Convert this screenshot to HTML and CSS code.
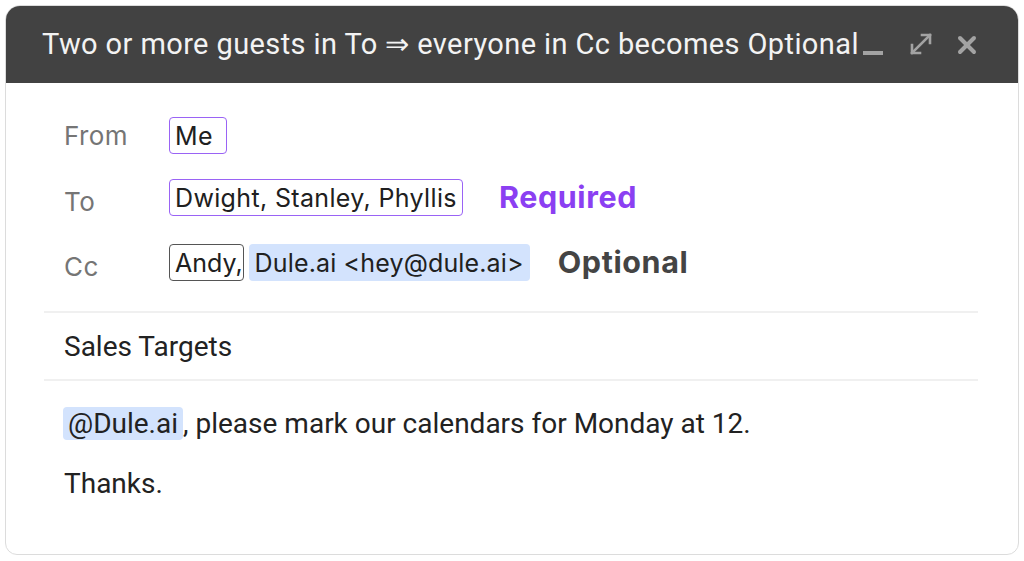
FILE: index.html
```html
<!DOCTYPE html>
<html>
<head>
<meta charset="utf-8">
<link rel="stylesheet" href="styles.css">
</head>
<body>
<div class="card">
  <div class="header">
    <div class="title">Two or more guests in To &rArr; everyone in Cc becomes Optional</div>
    <div class="controls">
      <svg class="ic ic-min" width="20" height="22" viewBox="0 0 20 22"><rect x="0" y="16" width="20" height="4" fill="#a3a3a3"/></svg>
      <svg class="ic ic-exp" width="24" height="24" viewBox="0 0 24 24"><g stroke="#a3a3a3" stroke-width="2.6" fill="none" stroke-linecap="square"><path d="M3 21 L21 3"/><path d="M13 3 H21 V11"/><path d="M3 13 V21 H11"/></g></svg>
      <svg class="ic ic-x" width="20" height="20" viewBox="0 0 20 20"><g stroke="#a3a3a3" stroke-width="4" stroke-linecap="round"><path d="M3 3 L17 17"/><path d="M17 3 L3 17"/></g></svg>
    </div>
  </div>
  <div class="content">
    <div class="fields">
      <div class="row row-from">
        <span class="label">From</span>
        <span class="chip chip-purple chip-me">Me</span>
      </div>
      <div class="row row-to">
        <span class="label">To</span>
        <span class="chip chip-purple">Dwight, Stanley, Phyllis</span>
        <span class="tag tag-req">Required</span>
      </div>
      <div class="row row-cc">
        <span class="label">Cc</span>
        <span class="chip chip-dark">Andy,</span>
        <span class="chip chip-blue">Dule.ai &lt;hey@dule.ai&gt;</span>
        <span class="tag tag-opt">Optional</span>
      </div>
    </div>
    <div class="subject">Sales Targets</div>
    <div class="message">
      <p class="line1"><span class="mention">@Dule.ai</span>, please mark our calendars for Monday at 12.</p>
      <p class="line2">Thanks.</p>
    </div>
  </div>
</div>
</body>
</html>
```
FILE: styles.css
```css
html, body {
  margin: 0;
  padding: 0;
  background: #ffffff;
}
body {
  padding: 5px 5px 0 5px;
  font-family: Roboto, "Liberation Sans", sans-serif;
}
.card {
  width: 1012px;
  height: 548px;
  border: 1px solid #dcdcdc;
  border-radius: 15px 15px 12px 12px;
  overflow: hidden;
  background: #fff;
}
.header {
  height: 77px;
  background: #424242;
  display: flex;
  align-items: center;
  padding-left: 36px;
  padding-right: 41px;
}
.title {
  color: #f3f3f3;
  font-size: 29px;
  letter-spacing: 0.4px;
  flex: 1;
  white-space: nowrap;
  margin-top: -1px;
}
.controls {
  display: flex;
  align-items: center;
}
.ic { display: block; }
.ic-min { margin-top: 3px; }
.ic-exp { margin-left: 26px; margin-top: -1px; }
.ic-x { margin-left: 24px; }
.content {
  padding: 0 40px 0 38px;
}
.fields {
  padding: 34px 0 0 20px;
  height: 230px;
  box-sizing: border-box;
  border-bottom: 2px solid #f0f0f0;
  font-family: Inter, "Noto Sans", sans-serif;
}
.row {
  display: flex;
  align-items: center;
  height: 37px;
}
.row-to { margin-top: 25px; }
.row-cc { margin-top: 28px; }
.label {
  width: 105px;
  color: #757575;
  font-size: 26px;
  letter-spacing: 0.4px;
  flex-shrink: 0;
}
.row-to .label, .row-cc .label { position: relative; top: 4px; }
.chip {
  height: 37px;
  box-sizing: border-box;
  display: inline-flex;
  align-items: center;
  padding: 0 5px;
  font-size: 25px;
  letter-spacing: 0.35px;
  color: #202020;
  border-radius: 4px;
}
.chip-purple { border: 1.5px solid #9a63f5; }
.chip-me { padding-right: 13px; }
.chip-dark { border: 1.5px solid #555; padding-right: 0; letter-spacing: 0; }
.chip-blue {
  background: #d3e3fd;
  margin-left: 5px;
  padding: 0 6px;
  letter-spacing: 0.15px;
}
.tag {
  font-weight: 700;
  font-size: 30.5px;
  letter-spacing: 0.6px;
}
.tag-req { color: #8b3ff2; margin-left: 36px; margin-top: -2px; }
.tag-opt { color: #444; margin-left: 28px; margin-top: -2px; }
.subject {
  height: 68px;
  box-sizing: border-box;
  border-bottom: 2px solid #f0f0f0;
  display: flex;
  align-items: center;
  padding-left: 20px;
  font-size: 28px;
  color: #222;
}
.message {
  padding-left: 20px;
  font-size: 28px;
  color: #222;
}
.message p { margin: 0; }
.line1 { margin-top: 26px !important; height: 33px; display: flex; align-items: center; }
.line2 { margin-top: 26px !important; line-height: 36px; }
.mention {
  display: inline-block;
  background: #d3e3fd;
  border-radius: 4px;
  line-height: 33px;
  padding: 0 5px;
  margin-left: -1px;
}
```
